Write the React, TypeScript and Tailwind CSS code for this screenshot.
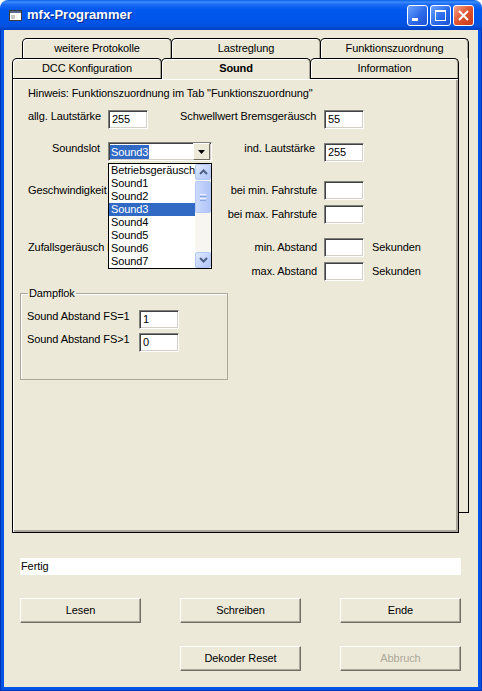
import React from "react";

const sunken =
    "bg-white border border-t-[#808080] border-l-[#808080] border-b-white border-r-white shadow-[inset_1px_1px_0_#404040,inset_-1px_-1px_0_#d4d0c8]";

function Field({ value = "", className = "" }: { value?: string; className?: string }) {
    return (
        <div className={`${sunken} w-[40px] h-[19px] pl-[3px] leading-[17px] ${className}`}>
            {value}
        </div>
    );
}

function Button({ label, disabled }: { label: string; disabled?: boolean }) {
    return (
        <button
            className={`w-[121px] h-[25px] bg-[#ece9d8] border border-t-white border-l-white border-r-[#716f64] border-b-[#716f64] shadow-[inset_-1px_-1px_0_#aca899] ${
                disabled ? "text-[#aca899]" : "text-black"
            }`}
        >
            {label}
        </button>
    );
}

function Tab({
    label,
    w,
    overlap,
    selected,
}: {
    label: string;
    w: string;
    overlap?: boolean;
    selected?: boolean;
}) {
    return (
        <div
            className={`${w} ${overlap ? "-ml-px" : ""} ${
                selected ? "h-[21px] -mb-px relative z-10 font-bold" : "h-[20px]"
            } bg-[#ece9d8] border-t border-l border-r border-black rounded-t-[5px] shadow-[inset_1px_1px_0_#fff,inset_-1px_0_0_#aca899] flex justify-center pt-[3px] leading-[13px]`}
        >
            {label}
        </div>
    );
}

function Scrollbar() {
    const btn =
        "w-[16px] h-[16px] rounded-[2px] border border-[#b4c8f6] bg-[linear-gradient(135deg,#e2eafe,#c1d3fb_60%,#b2c6f8)] flex items-center justify-center";
    return (
        <div className="w-[16px] h-full flex flex-col bg-[#f7f6f1]">
            <div className={btn}>
                <svg width="9" height="6" viewBox="0 0 9 6">
                    <path d="M1 5 L4.5 1.5 L8 5" fill="none" stroke="#4d6185" strokeWidth="2" />
                </svg>
            </div>
            <div className="mt-px h-[32px] rounded-[2px] border border-[#b4c8f6] bg-[linear-gradient(90deg,#cbdafc,#bccefa_50%,#b0c4f6)] flex flex-col items-center justify-center gap-[1px]">
                <div className="w-[6px] h-px bg-[#eef3ff]" />
                <div className="w-[6px] h-px bg-[#8aa4de]" />
                <div className="w-[6px] h-px bg-[#eef3ff]" />
                <div className="w-[6px] h-px bg-[#8aa4de]" />
            </div>
            <div className="flex-1" />
            <div className={btn}>
                <svg width="9" height="6" viewBox="0 0 9 6">
                    <path d="M1 1 L4.5 4.5 L8 1" fill="none" stroke="#4d6185" strokeWidth="2" />
                </svg>
            </div>
        </div>
    );
}

function Combo() {
    const items = [
        "Betriebsgeräusch",
        "Sound1",
        "Sound2",
        "Sound3",
        "Sound4",
        "Sound5",
        "Sound6",
        "Sound7",
    ];
    return (
        <div className="relative w-[104px] h-[19px]">
            <div className={`${sunken} w-full h-full flex items-center pl-[1px]`}>
                <span className="bg-[#316ac5] text-white px-[1px] leading-[14px]">Sound3</span>
                <div className="ml-auto mr-px w-[17px] h-[17px] bg-[#ece9d8] border border-t-white border-l-white border-r-[#716f64] border-b-[#716f64] flex items-center justify-center">
                    <svg width="7" height="4" viewBox="0 0 7 4">
                        <path d="M0 0 H7 L3.5 4 Z" fill="#000" />
                    </svg>
                </div>
            </div>
            <div className="absolute left-0 top-[21px] z-20 w-[104px] h-[106px] bg-white border border-black flex">
                <div className="flex-1 flex flex-col">
                    {items.map((it) => (
                        <div
                            key={it}
                            className={`h-[13px] leading-[13px] pl-[2px] whitespace-nowrap ${
                                it === "Sound3" ? "bg-[#316ac5] text-white" : ""
                            }`}
                        >
                            {it}
                        </div>
                    ))}
                </div>
                <Scrollbar />
            </div>
        </div>
    );
}

export default function App() {
    return (
        <div className="w-[482px] h-[691px] font-['Liberation_Sans',Arial,sans-serif] text-[11px] tracking-[-0.1px] text-black flex flex-col">
            {/* title bar */}
            <div className="h-[30px] shrink-0 rounded-t-[8px] bg-[linear-gradient(180deg,#0a5fe6_0%,#3b8cff_7%,#1d6df5_14%,#0058ee_32%,#0055e8_70%,#0050dd_88%,#0040c0_100%)] flex items-center pl-[9px] pr-[8px]">
                <svg width="13" height="11" viewBox="0 0 13 11">
                    <rect x="0.5" y="0.5" width="12" height="10" fill="#fff" stroke="#3a3a3a" />
                    <rect x="1" y="1" width="11" height="2" fill="#5a6a8a" />
                    <rect x="2" y="5" width="4" height="4" fill="#c8c8c8" />
                </svg>
                <span className="ml-[5px] text-white font-bold text-[13px] tracking-normal [text-shadow:1px_1px_0_#0a2a8a]">
                    mfx-Programmer
                </span>
                <div className="ml-auto flex gap-[2px] pt-[1px]">
                    <div className="w-[21px] h-[21px] rounded-[3px] border border-white bg-[linear-gradient(135deg,#6aa4ff,#2d6ae8_55%,#1c52d6)]">
                        <svg width="19" height="19" viewBox="0 0 19 19">
                            <rect x="4" y="12" width="6" height="3" fill="#fff" />
                        </svg>
                    </div>
                    <div className="w-[21px] h-[21px] rounded-[3px] border border-white bg-[linear-gradient(135deg,#6aa4ff,#2d6ae8_55%,#1c52d6)]">
                        <svg width="19" height="19" viewBox="0 0 19 19">
                            <rect x="4.5" y="4.5" width="10" height="10" fill="none" stroke="#fff" />
                            <rect x="4" y="4" width="11" height="2" fill="#fff" />
                        </svg>
                    </div>
                    <div className="w-[21px] h-[21px] rounded-[3px] border border-white bg-[linear-gradient(135deg,#f3a48c,#e0542f_50%,#c8391a)]">
                        <svg width="19" height="19" viewBox="0 0 19 19">
                            <path d="M5 5 L14 14 M14 5 L5 14" stroke="#fff" strokeWidth="2" />
                        </svg>
                    </div>
                </div>
            </div>

            {/* frame + client */}
            <div className="flex-1 bg-[#0054e3] px-[4px] pb-[4px] shadow-[inset_1px_0_0_#0033b8,inset_-1px_0_0_#0033b8,inset_0_-1px_0_#0033b8]">
                <div className="h-full bg-[#ece9d8] flex flex-col">
                    {/* tab control */}
                    <div className="mt-[8px] ml-[8px] flex flex-col">
                        <div className="ml-[10px] flex">
                            <Tab label="weitere Protokolle" w="w-[150px]" />
                            <Tab label="Lastreglung" w="w-[150px]" overlap />
                            <Tab label="Funktionszuordnung" w="w-[149px]" overlap />
                        </div>
                        <div className="flex items-start">
                            <div className="flex flex-col">
                                <div className="flex">
                                    <Tab label="DCC Konfiguration" w="w-[150px]" />
                                    <Tab label="Sound" w="w-[150px]" overlap selected />
                                    <Tab label="Information" w="w-[149px]" overlap />
                                </div>
                                <div className="w-[447px] h-[455px] border border-black shadow-[inset_1px_1px_0_#fff,inset_-2px_-2px_0_#aca899] pl-[15px] flex flex-col">
                                    <div className="mt-[8px] h-[13px] leading-[13px]">
                                        Hinweis: Funktionszuordnung im Tab "Funktionszuordnung"
                                    </div>

                                    <div className="mt-[10px] h-[19px] flex items-start">
                                        <div className="w-[80px] leading-[13px]">allg. Lautstärke</div>
                                        <Field value="255" />
                                        <div className="w-[176px] pl-[32px] leading-[13px] whitespace-nowrap">
                                            Schwellwert Bremsgeräusch
                                        </div>
                                        <Field value="55" />
                                    </div>

                                    <div className="mt-[13px] h-[19px] flex items-start">
                                        <div className="w-[80px] text-right pr-[8px] leading-[13px]">
                                            Soundslot
                                        </div>
                                        <Combo />
                                        <div className="w-[112px] text-right pr-[9px] leading-[13px] whitespace-nowrap">
                                            ind. Lautstärke
                                        </div>
                                        <Field value="255" className="mt-px h-[18px]" />
                                    </div>

                                    <div className="mt-[20px] h-[19px] flex items-center">
                                        <div className="w-[80px] whitespace-nowrap">Geschwindigkeit</div>
                                        <div className="w-[110px]" />
                                        <div className="w-[106px] text-right pr-[7px] whitespace-nowrap">
                                            bei min. Fahrstufe
                                        </div>
                                        <Field />
                                    </div>

                                    <div className="mt-[5px] h-[19px] flex items-center">
                                        <div className="w-[190px]" />
                                        <div className="w-[106px] text-right pr-[7px] whitespace-nowrap">
                                            bei max. Fahrstufe
                                        </div>
                                        <Field />
                                    </div>

                                    <div className="mt-[14px] h-[19px] flex items-center">
                                        <div className="w-[80px] whitespace-nowrap">Zufallsgeräusch I</div>
                                        <div className="w-[110px]" />
                                        <div className="w-[106px] text-right pr-[7px] whitespace-nowrap">
                                            min. Abstand
                                        </div>
                                        <Field />
                                        <div className="ml-[8px]">Sekunden</div>
                                    </div>

                                    <div className="mt-[5px] h-[19px] flex items-center">
                                        <div className="w-[190px]" />
                                        <div className="w-[106px] text-right pr-[7px] whitespace-nowrap">
                                            max. Abstand
                                        </div>
                                        <Field />
                                        <div className="ml-[8px]">Sekunden</div>
                                    </div>

                                    <fieldset className="mt-[6px] -ml-[8px] w-[208px] border border-[#aca899] shadow-[inset_1px_1px_0_#fff] pl-[7px] pb-[28px]">
                                        <legend className="px-[1px] leading-[13px]">Dampflok</legend>
                                        <div className="mt-[10px] h-[18px] flex items-start">
                                            <div className="w-[112px] -ml-px leading-[13px]">Sound Abstand FS=1</div>
                                            <Field value="1" className="h-[18px]" />
                                        </div>
                                        <div className="mt-[5px] h-[18px] flex items-start">
                                            <div className="w-[112px] -ml-px leading-[13px]">Sound Abstand FS&gt;1</div>
                                            <Field value="0" className="h-[18px]" />
                                        </div>
                                    </fieldset>
                                </div>
                            </div>
                            <div className="w-[10px] h-[455px] border-r border-b border-black" />
                        </div>
                    </div>

                    {/* status */}
                    <div className="mt-[25px] ml-[16px] w-[441px] h-[17px] bg-white pl-[1px] leading-[17px]">
                        Fertig
                    </div>

                    {/* buttons */}
                    <div className="mt-[23px] ml-[16px] flex gap-[39px]">
                        <Button label="Lesen" />
                        <Button label="Schreiben" />
                        <Button label="Ende" />
                    </div>
                    <div className="mt-[23px] ml-[176px] flex gap-[39px]">
                        <Button label="Dekoder Reset" />
                        <Button label="Abbruch" disabled />
                    </div>
                </div>
            </div>
        </div>
    );
}
